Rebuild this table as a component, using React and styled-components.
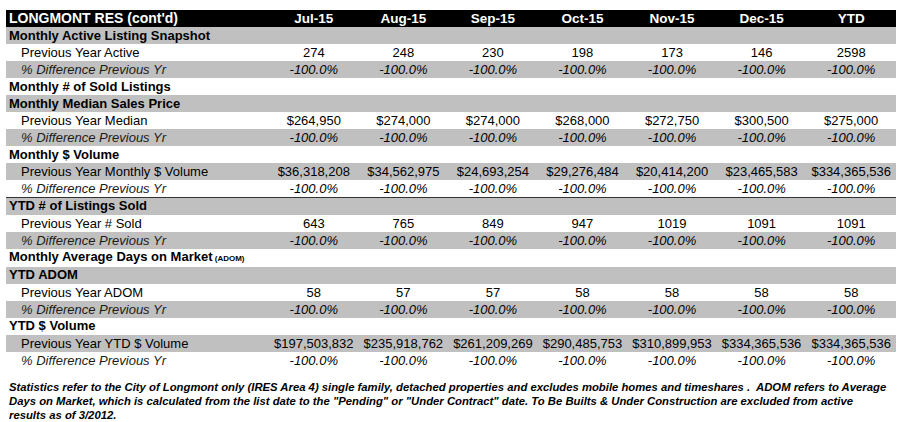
import React from 'react'
import styled, { createGlobalStyle } from 'styled-components'

const months = ['Jul-15', 'Aug-15', 'Sep-15', 'Oct-15', 'Nov-15', 'Dec-15', 'YTD']
const pct = Array(7).fill('-100.0%')

const rows = [
  { type: 'section', label: 'Monthly Active Listing Snapshot' },
  { type: 'value', label: 'Previous Year Active', values: ['274', '248', '230', '198', '173', '146', '2598'] },
  { type: 'pct', label: '% Difference Previous Yr', values: pct },
  { type: 'section', label: 'Monthly # of Sold Listings' },
  { type: 'section', label: 'Monthly Median Sales Price' },
  { type: 'value', label: 'Previous Year Median', values: ['$264,950', '$274,000', '$274,000', '$268,000', '$272,750', '$300,500', '$275,000'] },
  { type: 'pct', label: '% Difference Previous Yr', values: pct },
  { type: 'section', label: 'Monthly $ Volume' },
  { type: 'value', label: 'Previous Year Monthly $ Volume', values: ['$36,318,208', '$34,562,975', '$24,693,254', '$29,276,484', '$20,414,200', '$23,465,583', '$334,365,536'] },
  { type: 'pct', label: '% Difference Previous Yr', values: pct },
  { type: 'section', label: 'YTD # of Listings Sold', rule: true },
  { type: 'value', label: 'Previous Year # Sold', values: ['643', '765', '849', '947', '1019', '1091', '1091'] },
  { type: 'pct', label: '% Difference Previous Yr', values: pct },
  { type: 'section', label: 'Monthly Average Days on Market', note: '(ADOM)' },
  { type: 'section', label: 'YTD ADOM' },
  { type: 'value', label: 'Previous Year ADOM', values: ['58', '57', '57', '58', '58', '58', '58'] },
  { type: 'pct', label: '% Difference Previous Yr', values: pct },
  { type: 'section', label: 'YTD $ Volume' },
  { type: 'value', label: 'Previous Year YTD $ Volume', values: ['$197,503,832', '$235,918,762', '$261,209,269', '$290,485,753', '$310,899,953', '$334,365,536', '$334,365,536'] },
  { type: 'pct', label: '% Difference Previous Yr', values: pct },
]

function App() {
  return (
    <>
      <GlobalStyle />
      <Page>
        <Table>
          <colgroup>
            <col style={{ width: 263 }} />
            {months.map(m => <col key={m} />)}
          </colgroup>
          <thead>
            <HeadRow>
              <HeadTitle>LONGMONT RES (cont'd)</HeadTitle>
              {months.map(m => <HeadCell key={m}>{m}</HeadCell>)}
            </HeadRow>
          </thead>
          <tbody>
            {rows.map((r, i) => (
              <Row key={i} $shaded={i % 2 === 0} $rule={r.rule}>
                {r.type === 'section' ? (
                  <SectionCell colSpan={8}>
                    {r.label}
                    {r.note && <Note> {r.note}</Note>}
                  </SectionCell>
                ) : (
                  <>
                    <LabelCell $italic={r.type === 'pct'}>{r.label}</LabelCell>
                    {r.values.map((v, j) => (
                      <ValueCell key={j} $italic={r.type === 'pct'}>{v}</ValueCell>
                    ))}
                  </>
                )}
              </Row>
            ))}
          </tbody>
        </Table>
        <Footnote>
          Statistics refer to the City of Longmont only (IRES Area 4) single family, detached properties and excludes mobile homes and timeshares .&nbsp; ADOM refers to Average Days on Market, which is calculated from the list date to the "Pending" or "Under Contract" date. To Be Builts &amp; Under Construction are excluded from active results as of 3/2012.
        </Footnote>
      </Page>
    </>
  )
}

export default App

const GlobalStyle = createGlobalStyle`
  body {
    margin: 0;
    background: #ffffff;
    font-family: "Liberation Sans", Arial, sans-serif;
    color: #000;
  }
`

const Page = styled.div`
  width: 903px;
  height: 422px;
  padding: 10px 7px 0 6px;
  box-sizing: border-box;
  overflow: hidden;
`

const Table = styled.table`
  width: 890px;
  border-collapse: collapse;
  table-layout: fixed;
  font-size: 13px;
`

const HeadRow = styled.tr`
  background: #000;
  color: #fff;
  height: 17px;
`

const HeadTitle = styled.th`
  text-align: left;
  font-size: 14px;
  font-weight: bold;
  padding: 0 0 0 3px;
  line-height: 17px;
  white-space: nowrap;
`

const HeadCell = styled.th`
  text-align: center;
  font-size: 13.5px;
  font-weight: bold;
  padding: 0;
  line-height: 17px;
`

const Row = styled.tr`
  height: 17px;
  background: ${p => (p.$shaded ? '#c0c0c0' : '#ffffff')};
  border-top: ${p => (p.$rule ? '1px solid #333' : 'none')};
`

const SectionCell = styled.td`
  font-weight: bold;
  font-size: 13px;
  padding: 0 0 0 3px;
  line-height: 16px;
  white-space: nowrap;
`

const Note = styled.span`
  font-size: 8px;
`

const LabelCell = styled.td`
  padding: 0 0 0 15px;
  line-height: 17px;
  font-style: ${p => (p.$italic ? 'italic' : 'normal')};
  color: ${p => (p.$italic ? '#1a1a1a' : '#000')};
  white-space: nowrap;
`

const ValueCell = styled.td`
  text-align: center;
  padding: 0;
  line-height: 17px;
  font-style: ${p => (p.$italic ? 'italic' : 'normal')};
  white-space: nowrap;
`

const Footnote = styled.p`
  margin: 11px 0 0 3px;
  width: 880px;
  font-size: 11.3px;
  line-height: 14px;
  font-weight: bold;
  font-style: italic;
`
